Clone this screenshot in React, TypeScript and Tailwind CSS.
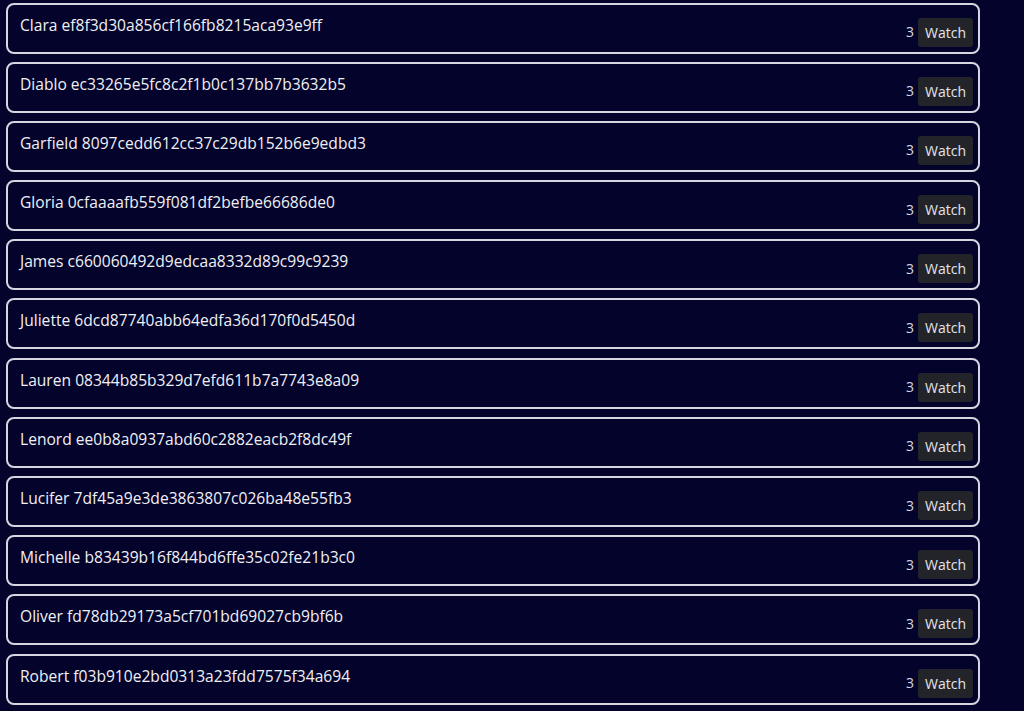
const streams = [
  { name: "Clara", id: "ef8f3d30a856cf166fb8215aca93e9ff", count: 3 },
  { name: "Diablo", id: "ec33265e5fc8c2f1b0c137bb7b3632b5", count: 3 },
  { name: "Garfield", id: "8097cedd612cc37c29db152b6e9edbd3", count: 3 },
  { name: "Gloria", id: "0cfaaaafb559f081df2befbe66686de0", count: 3 },
  { name: "James", id: "c660060492d9edcaa8332d89c99c9239", count: 3 },
  { name: "Juliette", id: "6dcd87740abb64edfa36d170f0d5450d", count: 3 },
  { name: "Lauren", id: "08344b85b329d7efd611b7a7743e8a09", count: 3 },
  { name: "Lenord", id: "ee0b8a0937abd60c2882eacb2f8dc49f", count: 3 },
  { name: "Lucifer", id: "7df45a9e3de3863807c026ba48e55fb3", count: 3 },
  { name: "Michelle", id: "b83439b16f844bd6ffe35c02fe21b3c0", count: 3 },
  { name: "Oliver", id: "fd78db29173a5cf701bd69027cb9bf6b", count: 3 },
  { name: "Robert", id: "f03b910e2bd0313a23fdd7575f34a694", count: 3 },
];

export default function App() {
  return (
    <div
      className="min-h-screen w-full bg-[#03032c] text-[#f0f0f4]"
      style={{ fontFamily: '"Open Sans", "Noto Sans", sans-serif' }}
    >
      <div className="flex w-[980px] flex-col gap-[8.2px] pl-[6px] pt-[2.5px]">
        {streams.map((s) => (
          <div
            key={s.id}
            className="flex h-[51px] items-start justify-between rounded-[8px] border-[2px] border-[#d6d6e0] bg-[#03032c]"
          >
            <div className="pl-[12px] pt-[9px] text-[15.6px] leading-[22px] font-medium">
              {s.name} {s.id}
            </div>
            <div className="flex items-center gap-[4px] self-end pb-[5px] pr-[5px]">
              <span className="text-[14px] leading-[20px] font-medium text-[#d8d8e0]">{s.count}</span>
              <button className="h-[29px] w-[55px] rounded-[3px] bg-[#222429] text-[14px] text-[#e4e4ea]">
                Watch
              </button>
            </div>
          </div>
        ))}
      </div>
    </div>
  );
}
